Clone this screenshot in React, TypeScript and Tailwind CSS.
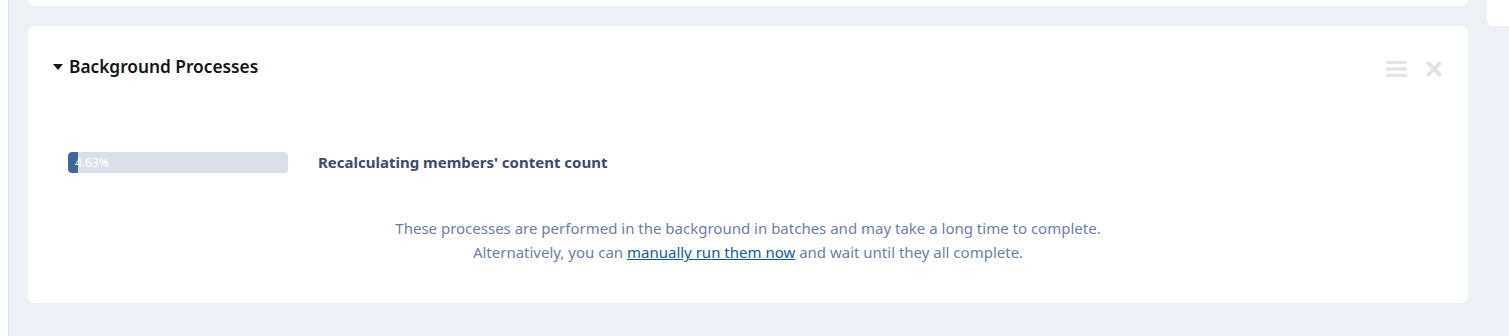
function Hamburger() {
  return (
    <svg width="21" height="16" viewBox="0 0 21 16" className="text-[#e3e4e6]">
      <rect x="0" y="0" width="21" height="3" fill="currentColor" />
      <rect x="0" y="6.5" width="21" height="3" fill="currentColor" />
      <rect x="0" y="13" width="21" height="3" fill="currentColor" />
    </svg>
  );
}

function CloseIcon() {
  return (
    <svg width="16" height="16" viewBox="0 0 16 16" className="text-[#e3e4e6]">
      <path
        d="M2.5 2.5l11 11M13.5 2.5l-11 11"
        stroke="currentColor"
        strokeWidth="4"
        strokeLinecap="round"
      />
    </svg>
  );
}

function Caret() {
  return (
    <svg width="10" height="6" viewBox="0 0 10 6" className="text-[#141414]">
      <path d="M0 0h10L5 6z" fill="currentColor" />
    </svg>
  );
}

export default function App() {
  const progress = 4.63;

  return (
    <div
      className="flex h-[336px] w-full overflow-hidden bg-[#edf0f5]"
      style={{ fontFamily: '"Noto Sans", "Segoe UI", sans-serif' }}
    >
      <div className="w-[9px] shrink-0 border-r border-[#dfe3ea] bg-white" />

      <div className="flex min-w-0 flex-1 flex-col gap-[20px] px-[19px]">
        <div className="-mt-[20px] h-[26px] rounded-b-md bg-white" />

        <section className="flex h-[277px] flex-col rounded-md bg-white px-[25px]">
          <div className="flex items-center justify-between pt-[28px]">
            <h2 className="flex items-center gap-[6px] text-[17.3px] font-semibold text-[#141414]">
              <Caret />
              Background Processes
            </h2>
            <div className="flex items-center gap-[19px] pt-[4px] pr-[1px]">
              <Hamburger />
              <CloseIcon />
            </div>
          </div>

          <div className="mt-[71px] flex items-center gap-[30px] px-[15px]">
            <div className="relative h-[21px] w-[220px] overflow-hidden rounded-[4px] bg-[#dbdfea]">
              <div
                className="h-full rounded-l-[4px] bg-[#3b6a98]"
                style={{ width: `${progress}%` }}
              />
              <span className="absolute left-[7px] top-0 text-[12px] leading-[21px] text-white">
                {progress}%
              </span>
            </div>
            <span className="text-[15px] font-bold text-[#3d4a6b]">
              Recalculating members' content count
            </span>
          </div>

          <div className="mt-[43px] text-center text-[15px] leading-[24px] text-[#6a7fa8]">
            <p>
              These processes are performed in the background in batches and may take a long time to
              complete.
            </p>
            <p>
              Alternatively, you can{" "}
              <a href="#" className="text-[#0f5aa6] underline">
                manually run them now
              </a>{" "}
              and wait until they all complete.
            </p>
          </div>
        </section>
      </div>

      <div className="flex w-[22px] shrink-0 flex-col">
        <div className="h-[26px] rounded-bl-md bg-white" />
      </div>
    </div>
  );
}
